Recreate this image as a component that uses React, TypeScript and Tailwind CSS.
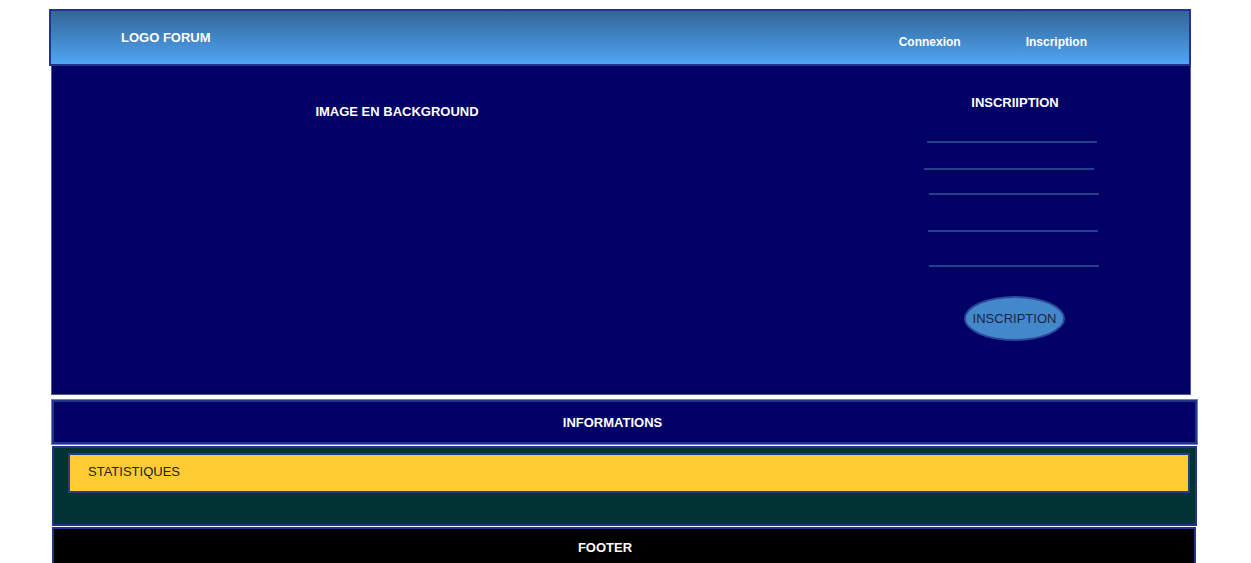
import React from "react";

// offsets of the wireframe input lines, left padding + gap above
const fields = [
  { pl: "pl-[3px]", mt: "mt-[31px]" },
  { pl: "pl-0", mt: "mt-[25px]" },
  { pl: "pl-[5px]", mt: "mt-[23px]" },
  { pl: "pl-[4px]", mt: "mt-[35px]" },
  { pl: "pl-[5px]", mt: "mt-[33px]" },
];

export default function App() {
  return (
    <div className="w-full h-[563px] overflow-hidden bg-white font-['Liberation_Sans',Arial,sans-serif] leading-[15px]">
      {/* header */}
      <header className="ml-[49px] mt-[9px] w-[1142px] h-[57px] border-2 border-[#22348a] bg-gradient-to-b from-[#336699] to-[#50a5f5] flex text-white font-bold">
        <div className="pl-[70px] pt-[19px] text-[13px]">LOGO FORUM</div>
        <nav className="ml-auto mr-[102px] pt-[24px] flex gap-[65px] text-[12px]">
          <a className="ml-[2px]">Connexion</a>
          <a>Inscription</a>
        </nav>
      </header>

      {/* hero */}
      <section className="ml-[51px] w-[1140px] h-[329px] bg-[#000066] border-l border-r border-b border-[#4a5aa0] flex">
        <div className="w-[872px] pr-[182px] text-center pt-[38px] text-white font-bold text-[13px]">
          IMAGE EN BACKGROUND
        </div>
        <div className="w-[182px] flex flex-col">
          <h2 className="pt-[29px] h-[44px] text-center text-white font-bold text-[13px]">
            INSCRIIPTION
          </h2>
          {fields.map((f, i) => (
            <div key={i} className={`${f.pl} ${f.mt}`}>
              <div className="w-[170px] h-[2px] bg-[#23408a]" />
            </div>
          ))}
          <button className="ml-[40px] mt-[29px] w-[101px] h-[45px] rounded-[50%] bg-[#4488cc] border-2 border-[#2a4a99] text-[#1a2540] text-[13px]">
            INSCRIPTION
          </button>
        </div>
      </section>

      {/* informations */}
      <section className="ml-[52px] mt-[5px] w-[1145px] h-[44px] bg-[#000066] border-2 border-[#22348a] outline outline-1 outline-[#6f7fbf] flex items-center justify-center pr-[24px] text-white font-bold text-[13px]">
        INFORMATIONS
      </section>

      {/* statistiques */}
      <section className="ml-[52px] mt-[2px] w-[1145px] h-[80px] bg-[#003333] border-2 border-[#22348a]">
        <div className="ml-[14px] mt-[5px] w-[1122px] h-[40px] bg-[#ffcc33] border-2 border-[#2a3a8a] flex items-center pl-[18px] pb-[3px] text-[#222] text-[13px]">
          STATISTIQUES
        </div>
      </section>

      {/* footer */}
      <footer className="ml-[52px] mt-[1px] w-[1144px] h-[40px] bg-black border-2 border-[#22348a] flex items-center justify-center pr-[38px] text-white font-bold text-[13px]">
        FOOTER
      </footer>
    </div>
  );
}
